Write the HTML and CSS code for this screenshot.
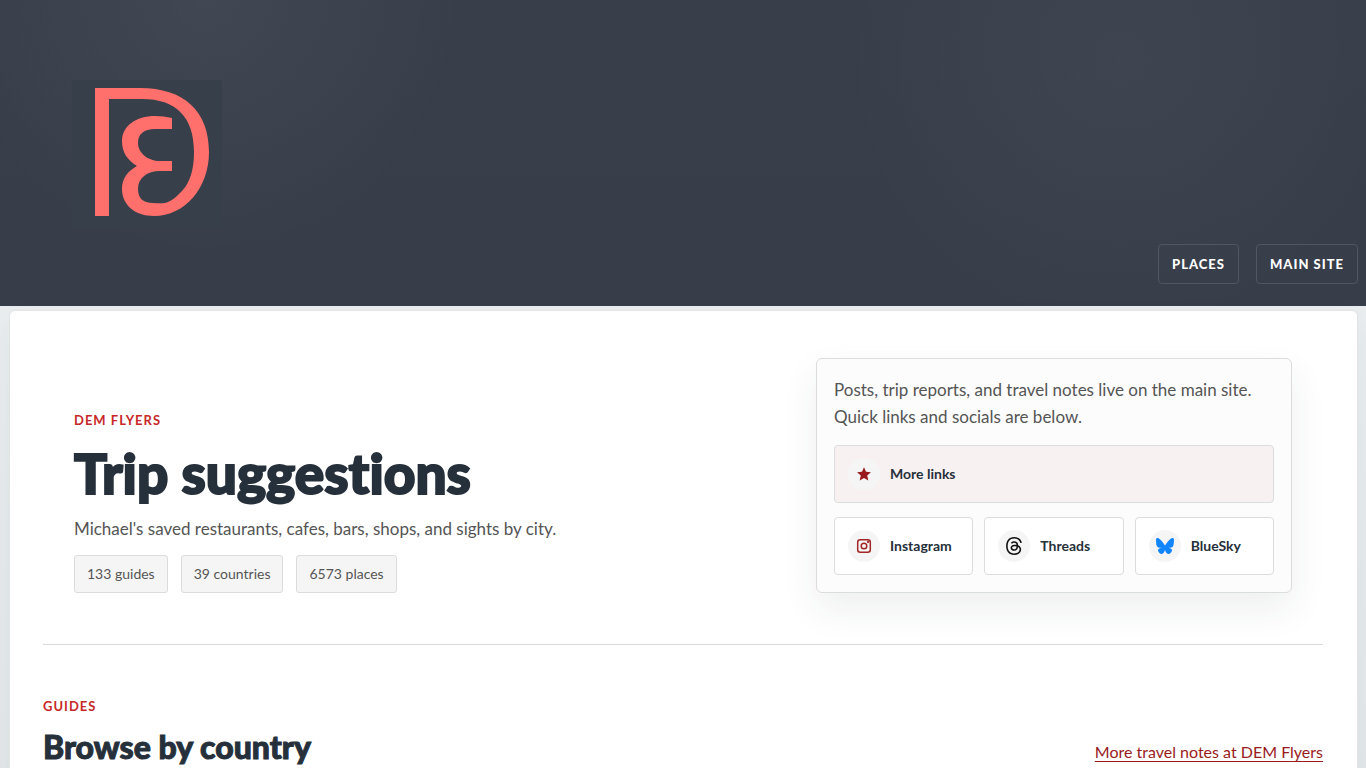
FILE: index.html
```html
<!DOCTYPE html>
<html lang="en">
<head>
  <meta charset="UTF-8">
  <meta name="viewport" content="width=device-width, initial-scale=1.0">
  <title>Trip suggestions | DEM Flyers</title>
  <link rel="stylesheet" href="styles.css">
</head>
<body>
  <header class="site-header">
    <a href="#" class="logo" aria-label="DEM Flyers">
      <svg viewBox="0 0 150 148" aria-hidden="true">
        <path fill="#ff6f6b" d="M23 8H68C112 8 137 31 137 72C137 108 113 136 82 136C63 136 50 125 50 109C50 98 56 91 65 86C55 80 50 72 50 61C50 46 64 36 83 36Q92 36 100 38V49H83C72 49 66 54 66 63C66 73 76 81 88 81H100V91H88C75 91 66 98 66 109C66 118 71 123 81 123C86 123 92 124 96 122C101 120 109 113 114 106C119 98 122 87 122 72C122 37 104 19 70 19H37V136H23Z"/>
      </svg>
    </a>
    <nav class="site-nav">
      <a href="#places">Places</a>
      <a href="#main-site">Main site</a>
    </nav>
  </header>

  <main class="page">
    <section class="hero">
      <div class="hero-text">
        <p class="eyebrow">DEM Flyers</p>
        <h1>Trip suggestions</h1>
        <p class="intro">Michael's saved restaurants, cafes, bars, shops, and sights by city.</p>
        <ul class="stats">
          <li>133 guides</li>
          <li>39 countries</li>
          <li>6573 places</li>
        </ul>
      </div>

      <aside class="link-card">
        <p>Posts, trip reports, and travel notes live on the main site. Quick links and socials are below.</p>
        <div class="links">
          <a href="#links" class="link-item featured">
            <span class="icon">
              <svg viewBox="0 0 24 24" width="16" height="16" fill="#991b1b"><path d="M12 2l3 6.800 7.400.700-5.600 4.900 1.700 7.300L12 17.900l-6.500 3.800 1.700-7.300L1.600 9.500 9 8.800z"/></svg>
            </span>
            More links
          </a>
          <a href="#instagram" class="link-item">
            <span class="icon">
              <svg viewBox="0 0 16 16" width="16" height="16" fill="none" stroke="#a32626" stroke-width="1.500"><rect x="1.700" y="1.700" width="12.600" height="12.600" rx="2.500"/><circle cx="8" cy="8" r="2.800"/><circle cx="12" cy="4" r=".4"/></svg>
            </span>
            Instagram
          </a>
          <a href="#threads" class="link-item">
            <span class="icon">
              <svg viewBox="0 0 24 24" width="18" height="18" fill="#111"><path d="M12.186 24h-.007c-3.581-.024-6.334-1.205-8.184-3.509C2.350 18.440 1.500 15.586 1.472 12.010v-.017c.03-3.579.879-6.430 2.525-8.482C5.845 1.205 8.600.024 12.180 0h.014c2.746.020 5.043.725 6.826 2.098 1.677 1.290 2.858 3.130 3.509 5.467l-2.040.569c-1.104-3.960-3.898-5.984-8.304-6.015-2.910.022-5.110.936-6.540 2.717C4.307 6.504 3.616 8.914 3.589 12c.027 3.086.718 5.496 2.057 7.164 1.430 1.783 3.631 2.698 6.540 2.717 2.623-.020 4.358-.631 5.800-2.045 1.647-1.613 1.618-3.593 1.090-4.798-.310-.710-.873-1.300-1.634-1.750-.192 1.352-.622 2.446-1.284 3.272-.886 1.102-2.140 1.704-3.730 1.790-1.202.065-2.361-.218-3.259-.801-1.063-.689-1.685-1.740-1.752-2.964-.065-1.190.408-2.285 1.330-3.082.880-.760 2.119-1.207 3.583-1.291a13.853 13.853 0 0 1 3.020.142c-.126-.742-.375-1.332-.750-1.757-.513-.586-1.308-.883-2.359-.890h-.029c-.844 0-1.992.232-2.721 1.320L7.734 7.847c.980-1.454 2.568-2.256 4.478-2.256h.044c3.194.020 5.097 1.975 5.287 5.388.108.046.216.094.321.142 1.490.700 2.580 1.761 3.154 3.070.797 1.820.871 4.790-1.548 7.158-1.850 1.810-4.094 2.628-7.277 2.650Zm1.003-11.690c-.242 0-.487.007-.739.021-1.836.103-2.980.946-2.916 2.143.067 1.256 1.452 1.839 2.784 1.767 1.224-.065 2.818-.543 3.086-3.710a10.500 10.500 0 0 0-2.215-.221z"/></svg>
            </span>
            Threads
          </a>
          <a href="#bluesky" class="link-item">
            <span class="icon">
              <svg viewBox="0 0 24 24" width="18" height="18" fill="#1185fe"><path d="M5.202 2.857C7.954 4.922 10.913 9.110 12 11.358c1.087-2.247 4.046-6.436 6.798-8.501C20.783 1.366 24 .213 24 3.883c0 .732-.420 6.156-.667 7.037-.856 3.061-3.978 3.842-6.755 3.370 4.854.826 6.089 3.562 3.422 6.299-5.065 5.196-7.280-1.304-7.847-2.970-.104-.305-.152-.448-.153-.327 0-.121-.050.022-.153.327-.568 1.666-2.782 8.166-7.847 2.970-2.667-2.737-1.432-5.473 3.422-6.300-2.777.473-5.899-.308-6.755-3.369C.420 10.040 0 4.615 0 3.883c0-3.670 3.217-2.517 5.202-1.026"/></svg>
            </span>
            BlueSky
          </a>
        </div>
      </aside>
    </section>

    <section class="guides">
      <div>
        <p class="eyebrow">Guides</p>
        <h2>Browse by country</h2>
      </div>
      <a href="#notes" class="notes-link">More travel notes at DEM Flyers</a>
    </section>
  </main>
</body>
</html>
```
FILE: styles.css
```css
* {
  margin: 0;
  padding: 0;
  box-sizing: border-box;
}

body {
  font-family: Lato, sans-serif;
  font-size: 17px;
  line-height: 27px;
  color: #555;
  background: linear-gradient(#edf1f2, #e2e6e9);
}

/* Header */
.site-header {
  display: flex;
  flex-direction: column;
  padding: 80px 8px 22px 72px;
  background:
    radial-gradient(circle at 15% 0, rgba(235, 255, 240, 0.05), transparent 260px),
    radial-gradient(circle at 82% 20%, rgba(235, 255, 240, 0.04), transparent 280px),
    linear-gradient(#383e4a, #373d49);
}

.logo {
  width: 150px;
  height: 148px;
  background: #373f4a;
}

.logo svg {
  display: block;
}

.site-nav {
  display: flex;
  justify-content: flex-end;
  gap: 17px;
  margin-top: 16px;
}

.site-nav a {
  padding: 0 13px;
  border: 1px solid #515762;
  border-radius: 4px;
  color: #fff;
  font-size: 13px;
  font-weight: 900;
  line-height: 38px;
  letter-spacing: 1px;
  text-transform: uppercase;
  text-decoration: none;
}

/* Page */
.page {
  margin: 4px 8px 0 9px;
  padding: 47px 34px 60px 33px;
  background: #fff;
  border: 1px solid #e1e3e5;
  border-radius: 6px;
  box-shadow: 0 12px 30px rgba(40, 50, 60, 0.05);
}

.eyebrow {
  color: #c62828;
  font-size: 13px;
  font-weight: 700;
  line-height: 20px;
  letter-spacing: 1px;
  text-transform: uppercase;
}

h1,
h2 {
  color: #26303b;
  font-weight: 900;
  font-variant-ligatures: none;
  -webkit-text-stroke: 1px #26303b;
}

h1 {
  margin: 15px 0 14px;
  font-size: 55px;
  line-height: 56px;
  -webkit-text-stroke-width: 2px;
}

h2 {
  margin-top: 11px;
  font-size: 32px;
  line-height: 40px;
}

/* Hero */
.hero {
  display: grid;
  grid-template-columns: 1fr 476px;
  gap: 48px;
  align-items: end;
  padding: 0 31px 51px;
  border-bottom: 1px solid #d9dadb;
}

.stats {
  display: flex;
  gap: 13px;
  margin-top: 13px;
  list-style: none;
}

.stats li {
  padding: 0 12px;
  background: #f5f5f5;
  border: 1px solid #dcdcdc;
  border-radius: 3px;
  font-size: 14px;
  line-height: 36px;
}

.link-card {
  padding: 17px;
  background: #fcfcfc;
  border: 1px solid #dadcdd;
  border-radius: 6px;
  box-shadow: 0 16px 36px rgba(38, 50, 56, 0.08);
}

.links {
  display: grid;
  grid-template-columns: repeat(3, 1fr);
  gap: 14px 11px;
  margin-top: 15px;
}

.link-item {
  display: flex;
  align-items: center;
  gap: 10px;
  padding: 12px 13px;
  background: #fff;
  border: 1px solid #dadcdd;
  border-radius: 4px;
  color: #26303b;
  font-size: 14px;
  font-weight: 700;
  line-height: 26px;
  text-decoration: none;
}

.featured {
  grid-column: 1 / -1;
  background: #f8f1f1;
}

.icon {
  display: grid;
  place-items: center;
  width: 32px;
  height: 32px;
  background: #f5f5f5;
  border-radius: 50%;
}

/* Guides */
.guides {
  display: flex;
  justify-content: space-between;
  align-items: flex-end;
  padding-top: 51px;
}

.notes-link {
  color: #991b1b;
  font-size: 16px;
  line-height: 30px;
  text-underline-offset: 3px;
}
```
